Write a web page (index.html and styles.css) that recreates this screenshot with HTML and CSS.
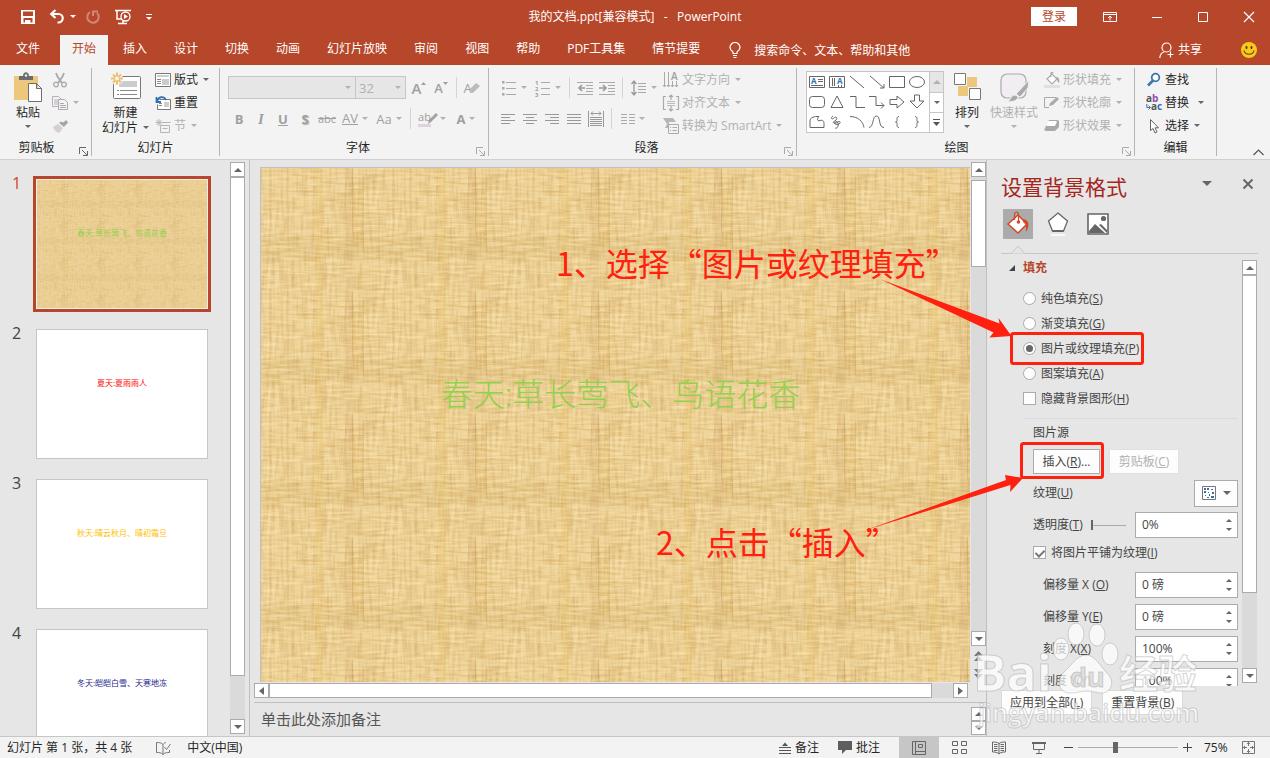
FILE: index.html
```html
<!DOCTYPE html>
<html lang="zh-CN">

<head>
    <meta charset="UTF-8">
    <meta name="viewport" content="width=device-width, initial-scale=1.0">
    <title>我的文档.ppt - PowerPoint</title>
    <link rel="stylesheet" href="styles.css">
</head>

<body>
    <svg class="defs" width="0" height="0" aria-hidden="true">
        <defs>
            <filter id="warp" x="0" y="0" width="1" height="1" color-interpolation-filters="sRGB">
                <feTurbulence type="fractalNoise" baseFrequency="0.35 0.03" numOctaves="2" seed="4" stitchTiles="stitch" />
                <feColorMatrix values="0 0 0 0 .76  0 0 0 0 .58  0 0 0 0 .3  1 0 0 0 -.4" />
            </filter>
            <filter id="weft" x="0" y="0" width="1" height="1" color-interpolation-filters="sRGB">
                <feTurbulence type="fractalNoise" baseFrequency="0.03 0.35" numOctaves="2" seed="9" stitchTiles="stitch" />
                <feColorMatrix values="0 0 0 0 .82  0 0 0 0 .64  0 0 0 0 .32  1 0 0 0 -.4" />
            </filter>
            <filter id="shine" x="0" y="0" width="1" height="1" color-interpolation-filters="sRGB">
                <feTurbulence type="fractalNoise" baseFrequency="0.05 0.4" numOctaves="2" seed="21" stitchTiles="stitch" />
                <feColorMatrix values="0 0 0 0 1  0 0 0 0 .92  0 0 0 0 .72  1.2 0 0 0 -.45" />
            </filter>
            <pattern id="linen" width="123" height="123" patternUnits="userSpaceOnUse">
                <rect width="123" height="123" fill="#efd59c" />
                <rect y="68" width="123" height="24" fill="#c8a860" opacity=".2" />
                <rect x="54" width="8" height="123" fill="#e5b84c" opacity=".25" />
                <rect x="84" width="8" height="123" fill="#b98b50" opacity=".16" />
                <rect x="92" y="20" width="10" height="58" fill="#deb04a" opacity=".2" />
                <rect width="123" height="123" filter="url(#warp)" />
                <rect width="123" height="123" filter="url(#weft)" />
                <rect width="123" height="123" filter="url(#shine)" />
                <path d="M91.500 0V66M102.500 8V84" stroke="#a8803c" opacity=".2" />
            </pattern>
            <pattern id="linen-small" width="123" height="123" patternUnits="userSpaceOnUse" patternTransform="scale(.3)" href="#linen" />
        </defs>
    </svg>

    <header class="titlebar">
        <div class="quick">
            <button aria-label="保存"><svg width="16" height="16" viewBox="0 0 16 16"><path fill="#fff" fill-rule="evenodd" d="M1 1h14v14H1zM3 2.500h10V7H3zM3.500 9h9v4.500h-2V11H5v2.500H3.500z" /></svg></button>
            <button class="undo" aria-label="撤消"><svg width="16" height="16" viewBox="0 0 16 16"><path d="M2 5h7.500a4.200 4.200 0 0 1 0 8.500H8.500M6.500 1 2.200 5l4.300 4" fill="none" stroke="#fff" stroke-width="2.200" /></svg><i class="caret"></i></button>
            <button class="faded" aria-label="恢复"><svg width="16" height="16" viewBox="0 0 16 16"><path d="M5 3.200A5.700 5.700 0 1 0 12 4M8 7V2.500h5" fill="none" stroke="#fff" stroke-width="2" /></svg></button>
            <button aria-label="从头开始"><svg width="18" height="16" viewBox="0 0 18 16"><path d="M1 1.500h16M3 2v8h5M9 11v4M4 14.500h9" fill="none" stroke="#fff" stroke-width="1.500" /><circle cx="11.500" cy="7.500" r="4.500" fill="#b7472a" stroke="#fff" stroke-width="1.300" /><path d="M10 5v5l4-2.500z" fill="#fff" /></svg></button>
            <button aria-label="自定义"><svg width="8" height="8" viewBox="0 0 8 8"><path d="M1 1.500h6" stroke="#fff" /><path d="M1 4h6L4 7z" fill="#fff" /></svg></button>
        </div>
        <h1>我的文档.ppt[兼容模式]&nbsp;&nbsp; -&nbsp;&nbsp; PowerPoint</h1>
        <div class="window-tools">
            <button class="login">登录</button>
            <button aria-label="功能区"><svg width="14" height="12" viewBox="0 0 14 12"><path d="M.5 1.500h13v9H.5zM.5 3.500h13M7 9.500V5M5 7l2-2 2 2" fill="none" stroke="#fff" /></svg></button>
            <button aria-label="最小化"><svg width="12" height="12" viewBox="0 0 12 12"><path d="M1 6.500h10" stroke="#fff" /></svg></button>
            <button aria-label="最大化"><svg width="12" height="12" viewBox="0 0 12 12"><path d="M1.500 1.500h9v9h-9z" fill="none" stroke="#fff" /></svg></button>
            <button aria-label="关闭"><svg width="12" height="12" viewBox="0 0 12 12"><path d="m1 1 10 10M11 1 1 11" stroke="#fff" stroke-width="1.200" /></svg></button>
        </div>
    </header>

    <nav class="tabs">
        <a href="#" class="file">文件</a>
        <a href="#" class="active">开始</a>
        <a href="#">插入</a>
        <a href="#">设计</a>
        <a href="#">切换</a>
        <a href="#">动画</a>
        <a href="#">幻灯片放映</a>
        <a href="#">审阅</a>
        <a href="#">视图</a>
        <a href="#">帮助</a>
        <a href="#">PDF工具集</a>
        <a href="#">情节提要</a>
        <label class="search">
            <svg width="12" height="16" viewBox="0 0 12 16"><path d="M4 11.500V10C2.500 8.800 1 7.500 1 5.500a5 5 0 0 1 10 0C11 7.500 9.500 8.800 8 10v1.500zM4 13.500h4M4.500 15.500h3" fill="none" stroke="#fff" stroke-width="1.200" /></svg>
            <input type="text" aria-label="搜索" placeholder="搜索命令、文本、帮助和其他">
        </label>
        <button class="share"><svg width="15" height="17" viewBox="0 0 15 17"><circle cx="7.500" cy="5.500" r="4.500" fill="none" stroke="#fff" stroke-width="1.200" /><path d="M.8 16c.3-3.500 2-5.500 4.500-6M11.500 9.500v6M8.500 12.500h6" fill="none" stroke="#fff" stroke-width="1.200" /></svg>共享</button>
        <button aria-label="反馈"><svg width="16" height="16" viewBox="0 0 16 16"><circle cx="8" cy="8" r="8" fill="#fdc913" /><ellipse cx="5.500" cy="5.500" rx="1" ry="1.700" fill="#444" /><ellipse cx="10.500" cy="5.500" rx="1" ry="1.700" fill="#444" /><path d="M3 8.500c1 5 9 5 10 0" fill="none" stroke="#444" stroke-width="1.200" /></svg></button>
    </nav>

    <section class="ribbon">
        <div class="group clipboard">
            <div class="tools">
                <button class="big">
                    <svg width="28" height="31" viewBox="0 0 28 31"><path d="M0 4h24v24H0z" fill="#ecc77c" /><path d="M5 8V4h4c0-5 6-5 6 0h4v4z" fill="#6d6d6d" /><circle cx="12" cy="3.500" r="1.200" fill="#f3f3f3" /><path d="M14.500 11.500h8l5 5v13h-13zM22.500 11.500v5h5" fill="#fff" stroke="#6d6d6d" /></svg>
                    <span>粘贴</span><i class="caret"></i>
                </button>
                <div class="rows off">
                    <button aria-label="剪切"><svg width="16" height="16" viewBox="0 0 16 16"><path d="M4 1c1 4 4 7 6 10M12 1c-1 4-4 7-6 10" fill="none" stroke="#aaa" stroke-width="1.800" /><circle cx="4" cy="12.500" r="2.300" fill="none" stroke="#aaa" stroke-width="1.300" /><circle cx="12" cy="12.500" r="2.300" fill="none" stroke="#aaa" stroke-width="1.300" /></svg></button>
                    <button aria-label="复制"><svg width="16" height="16" viewBox="0 0 16 16"><path d="M.5 1.500h6l3 3v7h-9zM2 5h4M2 7h4M2 9h4" fill="none" stroke="#b8b0b8" /><path d="M6.500 4.500h6l3 3v7h-9zM8 8.500h4M8 10.500h6M8 12.500h6" fill="#f3f3f3" stroke="#b0a8b0" /></svg><i class="caret"></i></button>
                    <button aria-label="格式刷"><svg width="17" height="16" viewBox="0 0 17 16"><path d="m1 9 5-3 5 4-4 5C4 14 2 12 1 9z" fill="#d5cfd5" /><path d="m7 5 5 4 1.500-2L16 5l-1.500-3L11 4.500 9 3.500z" fill="#a5a5a5" /></svg></button>
                </div>
            </div>
            <footer>剪贴板</footer><svg class="launch" width="9" height="9" viewBox="0 0 9 9"><path d="M.5 7V.5H7M3 3l5 5M8.500 4v4.500H4" fill="none" stroke="#666" /></svg>
        </div>

        <div class="group slides">
            <div class="tools">
                <button class="big">
                    <svg width="32" height="31" viewBox="0 0 32 31"><rect x="3.500" y="4.500" width="27" height="22" rx="1" fill="#fff" stroke="#777" /><path d="M9 9h18v6H9z" fill="#ccc" /><path d="M7 18.500h2M10 18.500h17M7 22.500h2M10 22.500h17" stroke="#888" /><path d="M7 0v13M1 6.500h12M2.500 2l9 9M11.500 2l-9 9" stroke="#f3f3f3" stroke-width="4" /><path d="M7 .5v12M1 6.500h12M3 2.500l8 8M11 2.500l-8 8" stroke="#ecc070" stroke-width="2" /><circle cx="7" cy="6.500" r="2" fill="#f3f3f3" /></svg>
                    <span>新建</span><span>幻灯片<i class="caret"></i></span>
                </button>
                <div class="rows">
                    <button><svg width="16" height="16" viewBox="0 0 16 16"><path d="M.5 1.500h15v13H.5z" fill="#fff" stroke="#777" /><path d="M2 3h12v2H2zM7 7h7v6H7z" fill="#ccc" /><path d="M2 7.500h4M2 9.500h4M2 11.500h4" stroke="#888" /></svg>版式<i class="caret"></i></button>
                    <button><svg width="16" height="16" viewBox="0 0 16 16"><path d="M4.500 4.500h11v10h-13v-5" fill="#fff" stroke="#777" /><path d="M9 7h5v5H9z" fill="#ccc" /><path d="M4 8.500h3M4 10.500h3" stroke="#888" /><path d="M1.500 2v5H6M2 6c2-5 7-5 9-1" fill="none" stroke="#2f6fb3" stroke-width="1.800" /></svg>重置</button>
                    <button class="off"><svg width="16" height="16" viewBox="0 0 16 16"><path d="M7 4.500h8.500M5.500 7.500h9v7h-9zM7.500 10.500h5M4 1v7M.5 4.500h7M1.500 2l5 5M6.500 2l-5 5" fill="none" stroke="#bbb3bb" /></svg>节<i class="caret"></i></button>
                </div>
            </div>
            <footer>幻灯片</footer>
        </div>

        <div class="group font off">
            <div class="lines">
                <div class="line">
                    <span class="combo name"><select disabled aria-label="字体"><option></option></select><i class="caret"></i></span>
                    <span class="combo size"><select disabled aria-label="字号"><option>32</option></select><i class="caret"></i></span>
                    <button class="letter">A<svg width="5" height="12" viewBox="0 0 5 12"><path d="M0 3h5L2.500 0z" fill="#a0a0a0" /></svg></button>
                    <button class="letter small">A<svg width="5" height="12" viewBox="0 0 5 12"><path d="M0 0h5L2.500 3z" fill="#a0a0a0" /></svg></button>
                    <i class="split"></i>
                    <button class="eraser" aria-label="清除格式"><span>A</span><svg width="12" height="11" viewBox="0 0 12 11"><path d="m0 8 7-7 4 3-7 7-3-1z" fill="#bbb" /></svg></button>
                </div>
                <div class="line">
                    <button><b>B</b></button>
                    <button><b class="it">I</b></button>
                    <button><b><u>U</u></b></button>
                    <button><b class="shade">S</b></button>
                    <button><s>abc</s></button>
                    <button class="drop"><span class="spacing">AV</span><i class="caret"></i></button>
                    <button class="drop">Aa<i class="caret"></i></button>
                    <i class="split"></i>
                    <button class="drop marker"><span>ab</span><svg width="11" height="12" viewBox="0 0 11 12"><path d="m1 11 1-4 7-7 2 2-7 7z" fill="#a0a0a0" /></svg><i class="caret"></i></button>
                    <button class="drop"><b>A</b><i class="caret"></i></button>
                </div>
            </div>
            <footer>字体</footer><svg class="launch" width="9" height="9" viewBox="0 0 9 9"><path d="M.5 7V.5H7M3 3l5 5M8.500 4v4.500H4" fill="none" stroke="#aaa" /></svg>
        </div>

        <div class="group para off">
            <div class="tools">
                <div class="lines">
                    <div class="line">
                        <button class="drop" aria-label="项目符号"><svg width="16" height="16" viewBox="0 0 16 16"><path d="M5 2.500h10M5 8.500h10M5 14.500h10" stroke="#aaa" /><path d="M1 1h2.500v2.500H1zM1 7h2.500v2.500H1zM1 13h2.500v2.500H1z" fill="#aaa" /></svg><i class="caret"></i></button>
                        <button class="drop" aria-label="编号"><svg width="16" height="16" viewBox="0 0 16 16"><path d="M6 2.500h9M6 8.500h9M6 14.500h9" stroke="#aaa" /><g class="digits"><text x="0" y="5">1</text><text x="0" y="11">2</text><text x="0" y="17">3</text></g></svg><i class="caret"></i></button>
                        <i class="split"></i>
                        <button aria-label="减少缩进"><svg width="16" height="14" viewBox="0 0 16 14"><path d="M0 1.500h16M9 4.500h7M9 7.500h7M9 10.500h7M0 13.500h16" stroke="#aaa" /><path d="M8 7H2M5 4 2 7l3 3" fill="none" stroke="#999" stroke-width="1.600" /></svg></button>
                        <button aria-label="增加缩进"><svg width="16" height="14" viewBox="0 0 16 14"><path d="M0 1.500h16M9 4.500h7M9 7.500h7M9 10.500h7M0 13.500h16" stroke="#aaa" /><path d="M0 7h6M4 4l3 3-3 3" fill="none" stroke="#999" stroke-width="1.600" /></svg></button>
                        <i class="split"></i>
                        <button class="drop" aria-label="行距"><svg width="16" height="16" viewBox="0 0 16 16"><path d="M7 3.500h8M7 6.500h8M7 9.500h8M7 12.500h8" stroke="#aaa" /><path d="M3 1v14M.5 4 3 1l2.500 3M.5 12 3 15l2.500-3" fill="none" stroke="#999" stroke-width="1.300" /></svg><i class="caret"></i></button>
                    </div>
                    <div class="line">
                        <button aria-label="左对齐"><svg width="14" height="12" viewBox="0 0 14 12"><path d="M0 1.500h14M0 4.500h9M0 7.500h14M0 10.500h9" stroke="#999" /></svg></button>
                        <button aria-label="居中"><svg width="14" height="12" viewBox="0 0 14 12"><path d="M0 1.500h14M3 4.500h8M0 7.500h14M3 10.500h8" stroke="#999" /></svg></button>
                        <button aria-label="右对齐"><svg width="14" height="12" viewBox="0 0 14 12"><path d="M0 1.500h14M5 4.500h9M0 7.500h14M5 10.500h9" stroke="#999" /></svg></button>
                        <button aria-label="两端对齐"><svg width="14" height="12" viewBox="0 0 14 12"><path d="M0 1.500h14M0 4.500h14M0 7.500h14M0 10.500h14" stroke="#999" /></svg></button>
                        <button aria-label="分散对齐"><svg width="16" height="16" viewBox="0 0 16 16"><path d="M.5 0v16M15.500 0v16M2 6.500h12M2 8.500h12M2 10.500h12M2 12.500h12M2 14.500h12M3 2.500h10M5 .5 3 2.500l2 2M11 .5l2 2-2 2" fill="none" stroke="#999" /></svg></button>
                        <i class="split"></i>
                        <button class="drop" aria-label="分栏"><svg width="14" height="12" viewBox="0 0 14 12"><path d="M0 1.500h6M0 4.500h6M0 7.500h6M0 10.500h6M8 1.500h6M8 4.500h6M8 7.500h6M8 10.500h6" stroke="#aaa" /></svg><i class="caret"></i></button>
                    </div>
                </div>
                <div class="rows">
                    <button><svg width="16" height="16" viewBox="0 0 16 16"><path d="M1.500 0v15M5.500 0v15M9.500 9v6M13.500 9v6M0 13l1.500 2L3 13M4 13l1.500 2L7 13M8 13l1.500 2 1.500-2M12 13l1.500 2 1.500-2" fill="none" stroke="#aaa" /><text class="letter-icon" x="8" y="8">A</text></svg>文字方向<i class="caret"></i></button>
                    <button><svg width="16" height="16" viewBox="0 0 16 16"><path d="M3 1.500H.5v13H3M13 1.500h2.500v13H13M8 0v5M6 2l2-2 2 2M8 11v5M6 14l2 2 2-2" fill="none" stroke="#aaa" stroke-width="1.200" /><path d="M4 6.500h8M4 8.500h8M4 10.500h8" stroke="#bbb" /></svg>对齐文本<i class="caret"></i></button>
                    <button><svg width="16" height="16" viewBox="0 0 16 16"><path d="M0 0h10l3 4H6v6H2l2-4z" fill="#bbb3bb" /><path d="M5.500 6.500h10v9h-10z" fill="#f3f3f3" stroke="#aaa" /><path d="M7 9.500h1M9.500 9.500H14M7 12.500h1M9.500 12.500H14" stroke="#aaa" /></svg>转换为 SmartArt<i class="caret"></i></button>
                </div>
            </div>
            <footer>段落</footer><svg class="launch" width="9" height="9" viewBox="0 0 9 9"><path d="M.5 7V.5H7M3 3l5 5M8.500 4v4.500H4" fill="none" stroke="#aaa" /></svg>
        </div>

        <div class="group draw">
            <div class="tools">
                <div class="gallery">
                    <div class="shapes">
                        <svg viewBox="0 0 16 14"><path d="M.5 1.500h15v11H.5zM9 4.500h5M9 6.500h5M2 10.500h12" /><text x="2" y="9">A</text></svg>
                        <svg viewBox="0 0 16 14"><path d="M.5 1.500h15v11H.5zM3.500 3v8M5.500 3v8M9.500 10v2M12.500 10v2" /><text x="8" y="9">A</text></svg>
                        <svg viewBox="0 0 16 14"><path d="m1 1 14 12" /></svg>
                        <svg viewBox="0 0 16 14"><path d="m1 1 14 12M15 9v4h-4" /></svg>
                        <svg viewBox="0 0 16 14"><path d="M.5 1.500h15v11H.5z" /></svg>
                        <svg viewBox="0 0 16 14"><ellipse cx="8" cy="7" rx="7.500" ry="5.500" /></svg>
                        <svg viewBox="0 0 16 14"><rect x=".5" y="1.500" width="15" height="11" rx="3" /></svg>
                        <svg viewBox="0 0 16 14"><path d="M8 1 2 12.500h12z" /></svg>
                        <svg viewBox="0 0 16 14"><path d="M1 1.500h6v11h9" /></svg>
                        <svg viewBox="0 0 16 14"><path d="M0 1.500h7v9h8M12 7.500l3 3-3 3" /></svg>
                        <svg viewBox="0 0 16 14"><path d="M1 4.500h7V1l7 6-7 6V9.500H1z" /></svg>
                        <svg viewBox="0 0 16 14"><path d="M5.500 0v6H1l7 7 7-7h-4.500V0z" /></svg>
                        <svg viewBox="0 0 16 14"><path d="M1 12.500V6c0-3 3-4.500 7-4.500h2c-3 3-1 5 1 4 3-1 4 1 4 3v4z" /></svg>
                        <svg viewBox="0 0 16 14"><path d="M4 1c-3 2-1 4 1 2s4 0 2 2-4 2-2 3 5-3 6-1-3 3-5 2 2-4 3-1-1 6-3 5" /></svg>
                        <svg viewBox="0 0 16 14"><path d="M1 1.500c8 0 13 5 14 11" /></svg>
                        <svg viewBox="0 0 16 14"><path d="M0 12.500C5 12 3 1 7.500 1S9 12.500 15 12.500" /></svg>
                        <svg viewBox="0 0 16 14"><path d="M10 1.500C6 1.500 10 7 6.500 7 10 7 6 12.500 10 12.500" /></svg>
                        <svg viewBox="0 0 16 14"><path d="M6 1.500c4 0 0 5.500 3.500 5.500C6 7 10 12.500 6 12.500" /></svg>
                    </div>
                    <div class="gallery-nav">
                        <button class="off" aria-label="上一行"><i class="caret up"></i></button>
                        <button aria-label="下一行"><i class="caret"></i></button>
                        <button aria-label="其他"><svg width="7" height="8" viewBox="0 0 7 8"><path d="M0 .5h7" stroke="#555" /><path d="M0 3h7L3.500 7z" fill="#555" /></svg></button>
                    </div>
                </div>
                <button class="big arrange">
                    <svg width="28" height="31" viewBox="0 0 28 31"><path d="M14 5h10v10H14zM5 14h10v10H5z" fill="#ecc77c" /><path d="M1.500 1.500h11v11h-11zM16.500 16.500h11v11h-11z" fill="#fff" stroke="#777" /></svg>
                    <span>排列</span><i class="caret"></i>
                </button>
                <button class="big off">
                    <svg width="32" height="31" viewBox="0 0 32 31"><rect x="3" y="2" width="25" height="24" rx="6" fill="#f1edf2" stroke="#aaa" stroke-width="1.200" /><path d="m31 8-1 8-8 9-4-3z" fill="#aaa" stroke="#f3f3f3" /><path d="M9 30c4-1 3-7 8-7 5 1 4 7-8 7z" fill="#aaa" stroke="#f3f3f3" /></svg>
                    <span>快速样式</span><i class="caret"></i>
                </button>
                <div class="rows off">
                    <button><svg width="16" height="16" viewBox="0 0 16 16"><path d="M0 13h16v3H0z" fill="#e4dde4" /><path d="m3 7 5-5 5 5-5 5zM7 5V1.500c0-1.500 2-1.500 2 0" fill="#fff" stroke="#aaa" stroke-width="1.200" /><path d="M12 5c3 0 4 3 3 6-2-1-1-3-3-4z" fill="#aaa" /></svg>形状填充<i class="caret"></i></button>
                    <button><svg width="16" height="16" viewBox="0 0 16 16"><path d="M12 2.500H.5v10H5" fill="none" stroke="#aaa" /><path d="m5 11 1-3 7-6 2 2-6 6z" fill="#aaa" /></svg>形状轮廓<i class="caret"></i></button>
                    <button><svg width="16" height="16" viewBox="0 0 16 16"><path d="M5 2h8c2 0 2 1 2 2v5l-4 4H3c-3 0-3-1-2-3z" fill="#aaa" /><path d="M5 3h7c1 0 1 1 0 3l-1 2H2.500C2 8 3.500 3 5 3z" fill="#fff" /></svg>形状效果<i class="caret"></i></button>
                </div>
            </div>
            <footer>绘图</footer><svg class="launch" width="9" height="9" viewBox="0 0 9 9"><path d="M.5 7V.5H7M3 3l5 5M8.500 4v4.500H4" fill="none" stroke="#aaa" /></svg>
        </div>

        <div class="group edit">
            <div class="tools">
                <div class="rows">
                    <button><svg width="16" height="16" viewBox="0 0 16 16"><circle cx="9.500" cy="5.500" r="3.800" fill="#fff" stroke="#3f76b5" stroke-width="1.800" /><path d="m7 8.500-5 5" stroke="#3f76b5" stroke-width="2.600" /></svg>查找</button>
                    <button class="wide"><svg class="abac" width="16" height="18" viewBox="0 0 16 18"><text x="0" y="8">a<tspan fill="#8a52ad">b</tspan></text><text x="5" y="16">a<tspan fill="#2f6fb3">c</tspan></text><path d="M.8 10v3.500h3M2.500 11.500l2 2-2 2" fill="none" stroke="#2f6fb3" /></svg>替换<i class="caret"></i></button>
                    <button><svg width="16" height="16" viewBox="0 0 16 16"><path d="M4.500 1.500v11l2.500-2 2 4.500 2-1-2-4.200h3.500z" fill="#fff" stroke="#666" /></svg>选择<i class="caret"></i></button>
                </div>
            </div>
            <footer>编辑</footer>
        </div>
        <button class="collapse" aria-label="折叠功能区"><svg width="11" height="7" viewBox="0 0 11 7"><path d="M.5 6 5.500 1l5 5" fill="none" stroke="#555" stroke-width="1.200" /></svg></button>
    </section>

    <main>
        <aside class="thumbs">
            <ol>
                <li class="selected"><span>1</span><a href="#" class="thumb green"><svg class="texture"><rect width="100%" height="100%" fill="url(#linen-small)" /></svg><em>春天:草长莺飞、鸟语花香</em></a></li>
                <li><span>2</span><a href="#" class="thumb red"><em>夏天:夏雨雨人</em></a></li>
                <li><span>3</span><a href="#" class="thumb gold"><em>秋天:晴云秋月、晴初霜旦</em></a></li>
                <li><span>4</span><a href="#" class="thumb navy"><em>冬天:皑皑白雪、天寒地冻</em></a></li>
            </ol>
            <div class="scroll">
                <button aria-label="向上"><i class="caret up"></i></button>
                <div class="track"><div class="grip thumbs-grip"></div></div>
                <button aria-label="向下"><i class="caret"></i></button>
            </div>
        </aside>

        <section class="editor">
            <div class="stage">
                <div class="canvas">
                    <article class="slide">
                        <svg class="texture"><rect width="100%" height="100%" fill="url(#linen)" /></svg>
                        <h2>春天:草长莺飞、鸟语花香</h2>
                    </article>
                    <div class="scroll flat">
                        <button aria-label="向左"><i class="caret left"></i></button>
                        <div class="track"><div class="grip slide-grip-x"></div></div>
                        <button aria-label="向右"><i class="caret right"></i></button>
                    </div>
                </div>
                <div class="side">
                    <div class="scroll">
                        <button aria-label="向上"><i class="caret up"></i></button>
                        <div class="track gap"><div class="grip slide-grip-y"></div></div>
                        <button aria-label="向下"><i class="caret"></i></button>
                    </div>
                    <div class="jump">
                        <button aria-label="上一张"><svg width="9" height="10" viewBox="0 0 9 10"><path d="M0 5 4.500 0 9 5zM0 10l4.500-5L9 10z" fill="#777" /></svg></button>
                        <button aria-label="下一张"><svg width="9" height="10" viewBox="0 0 9 10"><path d="m0 0 4.500 5L9 0zM0 5l4.500 5L9 5z" fill="#777" /></svg></button>
                    </div>
                </div>
            </div>
            <div class="notes">
                <input type="text" aria-label="备注" placeholder="单击此处添加备注">
                <div class="notes-nav">
                    <button aria-label="向上"><i class="caret up"></i></button>
                    <button aria-label="向下"><i class="caret"></i></button>
                </div>
            </div>
        </section>

        <aside class="pane">
            <div class="pane-head">
                <h2>设置背景格式</h2>
                <button aria-label="选项"><i class="caret large"></i></button>
                <button aria-label="关闭"><svg width="12" height="12" viewBox="0 0 12 12"><path d="m1.500 1.500 9 9M10.500 1.500l-9 9" stroke="#666" stroke-width="2" /></svg></button>
            </div>
            <div class="pane-tabs">
                <button class="active" aria-label="填充"><svg width="26" height="26" viewBox="0 0 26 26"><path d="m3 13 10-9 9 9-9 9z" fill="#fff" stroke="#d24726" stroke-width="1.500" /><path d="M9.500 9V4c0-4 4-4 4 0v6" fill="none" stroke="#d24726" stroke-width="1.200" /><circle cx="13.500" cy="11" r="1.800" fill="#d24726" /><path d="M18 8c6 1 7 6 3 13 0-5 1-7-3-10z" fill="#d24726" /></svg></button>
                <button aria-label="效果"><svg width="22" height="26" viewBox="0 0 22 26"><path d="m11 2 9.500 8-4 10h-11l-4-10z" fill="#fff" stroke="#666" stroke-width="1.300" /><path d="M5.500 20h11" stroke="#666" stroke-width="2" /><path d="M4 23h14v2H4z" fill="#f8f8f8" /></svg></button>
                <button aria-label="图片"><svg width="22" height="22" viewBox="0 0 22 22"><path d="M1 1h20v20H1z" fill="#fff" stroke="#666" stroke-width="1.600" /><path d="m2 18 6-7 10 9H2zM12 12l2-1 6 6v3z" fill="#666" /><circle cx="16.500" cy="5.500" r="2.600" fill="#666" /></svg></button>
            </div>
            <svg class="notch" height="10" width="36" viewBox="0 0 36 10"><path d="M0 9.500h10.500L17 2l6.500 7.500H36" fill="#e6e6e6" stroke="#c6c6c6" /></svg>
            <div class="pane-body">
                <form class="options">
                    <h3><svg width="8" height="8" viewBox="0 0 8 8"><path d="M7 1v6H1z" fill="#444" /></svg>填充</h3>
                    <label class="pick"><input type="radio" name="fill">纯色填充(<u>S</u>)</label>
                    <label class="pick"><input type="radio" name="fill">渐变填充(<u>G</u>)</label>
                    <label class="pick"><input type="radio" name="fill" checked>图片或纹理填充(<u>P</u>)</label>
                    <label class="pick"><input type="radio" name="fill">图案填充(<u>A</u>)</label>
                    <label class="pick"><input type="checkbox">隐藏背景图形(<u>H</u>)</label>
                    <hr>
                    <p class="source">图片源</p>
                    <div class="source-buttons">
                        <button type="button">插入(<u>R</u>)...</button>
                        <button type="button" disabled>剪贴板(<u>C</u>)</button>
                    </div>
                    <div class="field">
                        <span>纹理(<u>U</u>)</span>
                        <button type="button" class="swatch" aria-label="纹理"><svg width="14" height="14" viewBox="0 0 14 14"><path d="M.5.5h13v13H.5z" fill="#fff" stroke="#777" /><path d="M2 2h2v2H2zM5 2h2v2H5zM9 3h2v1H9zM2 5h2v2H2zM6 6h1v1H6zM10 6h2v2h-2zM3 9h1v1H3zM7 8h1v2H7zM9 10h3v2H9zM5 11h2v1H5z" fill="#3f6da8" /></svg><i class="caret large"></i></button>
                    </div>
                    <div class="field">
                        <label for="alpha">透明度(<u>T</u>)</label>
                        <input class="range" type="range" value="0" aria-label="透明度">
                        <div class="spin"><input id="alpha" type="text" value="0%"><span><i class="caret up"></i><i class="caret"></i></span></div>
                    </div>
                    <label class="pick tile"><input type="checkbox" checked>将图片平铺为纹理(<u>I</u>)</label>
                    <div class="field inner">
                        <label for="ox">偏移量 X (<u>O</u>)</label>
                        <div class="spin"><input id="ox" type="text" value="0 磅"><span><i class="caret up"></i><i class="caret"></i></span></div>
                    </div>
                    <div class="field inner">
                        <label for="oy">偏移量 Y(<u>E</u>)</label>
                        <div class="spin"><input id="oy" type="text" value="0 磅"><span><i class="caret up"></i><i class="caret"></i></span></div>
                    </div>
                    <div class="field inner">
                        <label for="sx">刻度 X(<u>X</u>)</label>
                        <div class="spin"><input id="sx" type="text" value="100%"><span><i class="caret up"></i><i class="caret"></i></span></div>
                    </div>
                    <div class="field inner">
                        <label for="sy">刻度 Y(<u>Y</u>)</label>
                        <div class="spin"><input id="sy" type="text" value="100%"><span><i class="caret up"></i><i class="caret"></i></span></div>
                    </div>
                </form>
                <div class="scroll">
                    <button aria-label="向上"><i class="caret up"></i></button>
                    <div class="track"><div class="grip pane-grip"></div></div>
                    <button aria-label="向下"><i class="caret"></i></button>
                </div>
            </div>
            <div class="pane-foot">
                <button>应用到全部(<u>L</u>)</button>
                <button>重置背景(<u>B</u>)</button>
            </div>
        </aside>

        <svg class="marks" width="730" height="576" viewBox="540 160 730 576">
            <g fill="#ff2010">
                <text x="556" y="276">1、选择“图片或纹理填充”</text>
                <text x="656" y="555">2、点击“插入”</text>
                <path d="m881 279.500 118.500 44-1-5.500 13 18-22 1.500 4-5z" />
                <path d="m866 530 140-50-1-5 18 3-13 14 .5-7z" />
            </g>
            <rect x="1011.500" y="333.500" width="131" height="30" rx="2" fill="none" stroke="#ff2010" stroke-width="3" />
            <rect x="1021.500" y="443.500" width="81" height="34" rx="2" fill="none" stroke="#ff2010" stroke-width="3" />
            <g class="watermark">
                <text class="logo" x="973" y="691">Bai</text>
                <ellipse cx="1061" cy="649" rx="8" ry="11" />
                <ellipse cx="1076" cy="634" rx="8" ry="11" />
                <ellipse cx="1097" cy="635" rx="8" ry="11" />
                <ellipse cx="1110" cy="654" rx="8" ry="11" />
                <path d="M1086 655c9 0 14 11 22 19 8 9 2 20-8 19-6-1-9-2-14-2s-9 2-16 2c-11 0-14-12-7-20 9-8 14-18 23-18z" />
                <text class="du" x="1070" y="687">du</text>
                <text class="jy" x="1119" y="688">经验</text>
                <text class="url" x="978" y="722">jingyan.baidu.com</text>
            </g>
        </svg>
    </main>

    <footer class="status">
        <span class="count">幻灯片 第 1 张，共 4 张</span>
        <svg width="15" height="14" viewBox="0 0 15 14"><path d="M7 3.500C5 1.500 3 1.500.5 1.500v10C3 11.500 5 11.500 7 13.500V3.500c1-1 2-2 3-2M7 13.500c2-2 4-2 6.500-2V9M8.500 6l2 2.500 4-5.500" fill="none" stroke="#777" /></svg>
        <span class="lang">中文(中国)</span>
        <button class="note"><svg width="12" height="12" viewBox="0 0 12 12"><path d="M0 5.500h12M0 8.500h12M0 11.500h12" stroke="#555" /><path d="m3 4 3-3.500L9 4z" fill="#555" /></svg>备注</button>
        <button class="note"><svg width="14" height="13" viewBox="0 0 14 13"><path d="M0 0h14v9H8l-4 4V9H0z" fill="#5e5e5e" /></svg>批注</button>
        <div class="views">
            <button class="active" aria-label="普通"><svg width="14" height="14" viewBox="0 0 14 14"><path d="M.5.5h13v13H.5zM3.500.5v13M3.500 10.500h10M6.500 3.500h4v3h-4z" fill="none" stroke="#666" /></svg></button>
            <button aria-label="幻灯片浏览"><svg width="15" height="14" viewBox="0 0 15 14"><path d="M.5.500h5v4h-5zM9.500.500h5v4h-5zM.5 8.500h5v4h-5zM9.500 8.500h5v4h-5z" fill="none" stroke="#666" /></svg></button>
            <button aria-label="阅读视图"><svg width="14" height="14" viewBox="0 0 14 14"><path d="M7 2.500C5 1 3 1 .5 1v10c2.500 0 4.500 0 6.500 2 2-2 4-2 6.500-2V1C11 1 9 1 7 2.500zM7 2v11M2 3.500h3.500M2 5.500h3.500M2 7.500h3.500M2 9.500h3.500M8.500 3.500H12M8.500 5.500H12M8.500 7.500H12M8.500 9.500H12" fill="none" stroke="#666" /></svg></button>
            <button aria-label="幻灯片放映"><svg width="14" height="14" viewBox="0 0 14 14"><path d="M0 2h14" stroke="#666" stroke-width="2" /><path d="M1.500 2v6.500h11V2M7 8.500v4M4 12.500h6" fill="none" stroke="#666" /></svg></button>
        </div>
        <button aria-label="缩小"><svg width="9" height="9" viewBox="0 0 9 9"><path d="M0 4.500h9" stroke="#444" /></svg></button>
        <input class="zoom" type="range" min="0" max="100" value="37" aria-label="缩放">
        <button aria-label="放大"><svg width="9" height="9" viewBox="0 0 9 9"><path d="M0 4.500h9M4.500 0v9" stroke="#444" /></svg></button>
        <span class="percent">75%</span>
        <button class="fit" aria-label="适应窗口"><svg width="13" height="13" viewBox="0 0 13 13"><path d="M.5.500h12v12H.5zM6.500 1v4M5 3l1.500-1.500L8 3M6.500 12V8M5 10l1.500 1.500L8 10M1 6.500h4M12 6.500H8M3 5 1.500 6.500 3 8M10 5l1.500 1.500L10 8" fill="none" stroke="#777" /></svg></button>
    </footer>
</body>

</html>
```

FILE: styles.css
```css
* {
    box-sizing: border-box;
    margin: 0;
    padding: 0;
}
body {
    height: 100vh;
    display: flex;
    flex-direction: column;
    overflow: hidden;
    font-family: "Open Sans", "Noto Sans CJK SC", sans-serif;
    font-size: 12px;
    line-height: 16px;
    color: #262626;
    background-color: #e6e6e6;
}
button, input, select {
    font: inherit;
    color: inherit;
    border: 0;
    background: none;
    border-radius: 0;
}
button {
    display: flex;
    align-items: center;
    justify-content: center;
    white-space: nowrap;
}
a {
    color: inherit;
    text-decoration: none;
}
svg {
    flex: none;
    display: block;
}
.defs {
    position: absolute;
}

/* little triangles */
.caret {
    width: 0;
    height: 0;
    flex: none;
    color: #666;
    border: 3px solid transparent;
    border-top-color: currentColor;
    border-bottom-width: 0;
}
.caret.up {
    border-width: 0 4px 4px;
    border-bottom-color: currentColor;
}
.caret.large {
    border-width: 5px 5px 0;
}
.titlebar .caret {
    color: #fff;
}
.off, .off .caret {
    color: #b1b1b1;
}

/* title bar */
.titlebar {
    height: 35px;
    flex: none;
    display: grid;
    grid-template-columns: 1fr auto 1fr;
    align-items: center;
    padding-bottom: 2px;
    color: #fff;
    background-color: #b7472a;
}
.titlebar h1 {
    font-size: 12px;
    font-weight: normal;
}
.quick {
    display: flex;
    align-items: center;
    gap: 13px;
    padding-left: 20px;
}
.quick button {
    gap: 5px;
}
.quick .undo {
    margin-right: -4px;
}
.faded {
    opacity: .35;
}
.window-tools {
    display: flex;
    align-items: center;
    justify-content: flex-end;
    gap: 34px;
    padding-right: 15px;
}
.login {
    width: 46px;
    height: 19px;
    margin-right: -8px;
    color: #b7472a;
    background-color: #fff;
}

/* tabs */
.tabs {
    height: 30px;
    flex: none;
    display: flex;
    align-items: center;
    gap: 3px;
    padding: 0 13px 0 4px;
    color: #fff;
    background-color: #b7472a;
}
.tabs a {
    height: 30px;
    line-height: 28px;
    padding: 0 12px;
    white-space: nowrap;
}
.tabs .file {
    margin-right: 5px;
}
.tabs .active {
    color: #b7472a;
    background-color: #f3f3f3;
}
.search {
    flex: 1;
    display: flex;
    align-items: center;
    gap: 13px;
    padding-left: 14px;
}
.search input {
    flex: 1;
    min-width: 0;
    height: 28px;
}
.search input::placeholder {
    color: #fff;
}
.share {
    gap: 4px;
    margin-right: 36px;
}

/* ribbon */
.ribbon {
    height: 95px;
    flex: none;
    display: flex;
    padding: 3px 0;
    background-color: #f3f3f3;
    border-bottom: 1px solid #d2d0ce;
}
.ribbon svg {
    overflow: visible;
}
.group {
    position: relative;
    display: flex;
    flex-direction: column;
    border-right: 1px solid #b5b5b5;
}
.group footer {
    height: 19px;
    line-height: 22px;
    text-align: center;
    color: #262626;
}
.tools {
    height: 69px;
    display: flex;
}
.launch {
    position: absolute;
    right: 3px;
    bottom: 0;
}
.big {
    flex-direction: column;
    justify-content: flex-start;
    padding-top: 4px;
    line-height: 15px;
}
.big span {
    display: flex;
    align-items: center;
    gap: 5px;
}
.big span:first-of-type {
    margin-top: 2px;
}
.big > .caret {
    margin-top: 5px;
}
.rows {
    display: flex;
    flex-direction: column;
}
.rows button {
    height: 23px;
    justify-content: flex-start;
    gap: 3px;
}
.rows .caret {
    margin-left: 2px;
}
.line .caret {
    margin-left: 4px;
}
.rows .wide .caret {
    margin-left: 6px;
}
.lines {
    height: 69px;
    padding-top: 4px;
}
.line {
    height: 31px;
    display: flex;
    align-items: center;
}
.line button {
    width: 22px;
    height: 22px;
}
.line .drop {
    width: 34px;
}
.split {
    width: 1px;
    height: 21px;
    margin: 0 4px;
    background-color: #d5d5d5;
}
.clipboard {
    width: 92px;
}
.clipboard .tools {
    gap: 10px;
    padding-left: 14px;
}
.clipboard footer {
    padding-right: 18px;
}
.slides {
    width: 128px;
}
.slides .tools {
    gap: 6px;
    padding-left: 10px;
}
.font {
    width: 269px;
    padding-left: 8px;
}
.font .line {
    color: #a0a0a0;
    font-size: 13px;
}
.combo {
    height: 23px;
    display: flex;
    align-items: center;
    padding-right: 4px;
    color: #b1b1b1;
    background-color: #e6e6e6;
    border: 1px solid #c6c6c6;
}
.combo select {
    flex: 1;
    min-width: 0;
    padding-left: 3px;
    appearance: none;
    opacity: 1;
}
.name {
    width: 128px;
}
.size {
    width: 50px;
    margin-right: 2px;
    border-left: 0;
}
.line .letter {
    font-size: 15px;
    font-weight: 600;
}
.line .small {
    font-size: 13px;
}
.eraser svg {
    margin-left: -3px;
}
.it {
    font-family: "Liberation Serif", serif;
    font-style: italic;
    font-size: 15px;
}
.shade {
    text-shadow: 1px 1px 1px #aaa;
}
.line s {
    font-size: 11px;
}
.spacing {
    line-height: 12px;
    border-bottom: 1px solid #a0a0a0;
}
.marker span {
    font-size: 11px;
    line-height: 14px;
    border-bottom: 3px solid #ddd5dd;
}
.marker svg {
    margin-left: -4px;
}
.line .marker .caret {
    margin-left: 2px;
}
.para {
    width: 308px;
    padding-left: 8px;
}
.para .tools {
    gap: 2px;
}
.para .lines {
    width: 164px;
}
.digits {
    font-size: 6px;
    font-weight: bold;
    fill: #a0a0a0;
}
.letter-icon {
    font-size: 10px;
    font-weight: 600;
    fill: #a0a0a0;
}
.abac {
    font-size: 10px;
    font-weight: bold;
    fill: #555;
}
.draw {
    width: 338px;
}
.draw .tools {
    padding-left: 9px;
}
.draw footer {
    padding-right: 18px;
}
.gallery {
    width: 138px;
    height: 62px;
    margin-top: 3px;
    display: flex;
    background-color: #fff;
    border: 1px solid #c6c6c6;
}
.shapes {
    flex: 1;
    display: grid;
    grid-template-columns: repeat(6, 20px);
    grid-template-rows: repeat(3, 20px);
    place-items: center;
}
.shapes svg {
    width: 16px;
    height: 14px;
    fill: none;
    stroke: #666;
}
.shapes text {
    font-size: 8px;
    font-weight: bold;
    fill: #2f6fb3;
    stroke: none;
}
.gallery-nav {
    width: 14px;
    display: grid;
    grid-template-rows: repeat(3, 20px);
    border-left: 1px solid #c6c6c6;
}
.gallery-nav button + button {
    border-top: 1px solid #c6c6c6;
}
.gallery-nav .off {
    background-color: #e6e6e6;
}
.arrange {
    padding: 4px 9px 0;
}
.draw .rows {
    margin-left: 6px;
}
.edit {
    width: 82px;
}
.edit .tools {
    padding-left: 11px;
}
.collapse {
    margin-left: auto;
    align-self: flex-end;
    padding-right: 6px;
}

/* work area */
main {
    flex: 1;
    min-height: 0;
    position: relative;
    display: grid;
    grid-template-columns: 250px minmax(0, 1fr) 283px;
    overflow: hidden;
}
.scroll {
    width: 15px;
    flex: none;
    display: flex;
    flex-direction: column;
}
.scroll button {
    width: 15px;
    height: 15px;
    flex: none;
    background-color: #fff;
    border: 1px solid #ababab;
}
.scroll .caret, .notes-nav .caret {
    border-width: 4px 4px 0;
}
.scroll .up, .notes-nav .up {
    border-width: 0 4px 4px;
}
.scroll .left {
    border-width: 4px 5px 4px 0;
    border-color: transparent currentColor;
}
.scroll .right {
    border-width: 4px 0 4px 5px;
    border-color: transparent currentColor;
}
.track {
    flex: 1;
    display: flex;
    flex-direction: column;
    background-color: #dadada;
}
.grip {
    background-color: #fff;
    border: 1px solid #ababab;
}
.flat, .flat .track {
    flex-direction: row;
}
.flat {
    width: auto;
}
.thumbs {
    min-height: 0;
    display: flex;
    justify-content: space-between;
    padding: 2px 4px 2px 0;
    border-right: 1px solid #c0c0c0;
}
.thumbs ol {
    display: flex;
    flex-direction: column;
    gap: 20px;
    list-style: none;
    padding: 17px 0 0 12px;
    height: calc(100% + 2px);
    overflow: hidden;
}
.thumbs li {
    display: flex;
    gap: 15px;
    padding-right: 3px;
    font-size: 16px;
    line-height: 8px;
    color: #444;
}
.thumbs .selected {
    color: #d24726;
}
.thumbs li > span {
    width: 9px;
}
.thumb {
    width: 172px;
    height: 130px;
    position: relative;
    display: flex;
    justify-content: center;
    padding-top: 48px;
    background-color: #fff;
    border: 1px solid #c6c6c6;
}
.thumb em {
    position: relative;
    font-size: 8px;
    line-height: 10px;
    font-style: normal;
}
.selected .thumb {
    background-color: #e9cd93;
    border-color: #eee;
    outline: 3px solid #b7472a;
}
.selected .texture {
    opacity: .6;
}
.thumb.green, .slide h2 {
    color: #92d050;
}
.thumb.red {
    color: #ff0000;
}
.thumb.gold {
    color: #ffc000;
}
.thumb.navy {
    color: #1c1c8c;
}
.thumbs-grip {
    height: 92%;
}
.texture {
    position: absolute;
    top: 0;
    left: 0;
    width: 100%;
    height: 100%;
}
.editor {
    min-height: 0;
    display: flex;
    flex-direction: column;
    padding: 2px 0 2px 4px;
    border-right: 1px solid #c0c0c0;
}
.stage {
    flex: 1;
    min-height: 0;
    display: flex;
}
.canvas {
    flex: 1;
    display: flex;
    flex-direction: column;
    gap: 1px;
    padding-bottom: 4px;
    padding-top: 5px;
}
.slide {
    flex: 1;
    position: relative;
    margin-left: 6px;
    padding-top: 202px;
    text-align: center;
    border: 1px solid #c0c0c0;
    border-width: 1px 0 0 1px;
}
.slide h2 {
    position: relative;
    font-size: 32px;
    line-height: 48px;
    font-weight: 300;
    padding-left: 10px;
}
.canvas .scroll {
    margin-right: 2px;
}
.slide-grip-x {
    width: 97%;
}
.side {
    width: 16px;
    padding-left: 1px;
    display: flex;
    flex-direction: column;
}
.side .scroll {
    flex: 1;
}
.track.gap {
    padding-top: 3px;
}
.slide-grip-y {
    height: 87px;
}
.jump {
    height: 56px;
    display: flex;
    flex-direction: column;
    align-items: center;
    gap: 8px;
    padding-top: 5px;
}
.notes {
    height: 32px;
    display: flex;
    justify-content: space-between;
    border-top: 1px solid #c0c0c0;
    padding-left: 7px;
}
.notes input {
    flex: 1;
    font-size: 15px;
    color: #555;
}
.notes input::placeholder {
    color: #555;
}
.notes-nav {
    width: 15px;
    padding-top: 4px;
}
.notes-nav button {
    width: 15px;
    height: 14px;
    background-color: #fff;
    border: 1px solid #ababab;
}

/* format pane */
.pane {
    min-height: 0;
    display: flex;
    flex-direction: column;
    padding: 14px 12px 0 14px;
    color: #444;
}
.pane-head {
    height: 27px;
    display: flex;
    align-items: center;
    gap: 30px;
}
.pane-head h2 {
    flex: 1;
    font-size: 21px;
    line-height: 27px;
    font-weight: normal;
    color: #a4261d;
}
.pane-head button {
    margin-bottom: 8px;
}
.pane-head button:last-child {
    margin-right: 4px;
}
.pane-tabs {
    display: flex;
    gap: 10px;
    padding: 8px 0 5px 2px;
}
.pane-tabs button {
    width: 30px;
    height: 30px;
}
.pane-tabs .active {
    background-color: #ababab;
}
.notch {
    width: 36px;
    position: relative;
    margin-bottom: -1px;
}
.pane-body {
    flex: 1;
    min-height: 0;
    display: flex;
    justify-content: space-between;
    border-top: 1px solid #c6c6c6;
    padding-top: 6px;
}
.pane-body > .scroll {
    height: calc(100% - 3px);
    margin-right: 1px;
}
.pane-grip {
    height: 81%;
}
.options {
    width: 237px;
    overflow: hidden;
    padding-left: 10px;
}
.options h3 {
    height: 26px;
    display: flex;
    gap: 7px;
    align-items: flex-start;
    font-size: 12px;
    font-weight: bold;
    line-height: 16px;
    color: #b7472a;
    margin-left: -3px;
}
.options h3 svg {
    margin-top: 4px;
}
.pick {
    height: 25px;
    display: flex;
    align-items: center;
    padding-left: 12px;
    white-space: nowrap;
}
.pick input {
    appearance: none;
    width: 13px;
    height: 13px;
    margin-right: 5px;
    background-color: #fdfdfd;
    border: 1px solid #ababab;
    display: grid;
    place-content: center;
}
.pick [type="radio"] {
    border-radius: 50%;
}
.pick [type="radio"]:checked::before {
    content: "";
    width: 7px;
    height: 7px;
    border-radius: 50%;
    background-color: #666;
}
.pick [type="checkbox"]:checked::before {
    content: "";
    width: 4px;
    height: 7px;
    border: solid #777;
    border-width: 0 2px 2px 0;
    transform: rotate(45deg);
}
.options hr {
    border: 0;
    border-top: 1px solid #dadada;
    margin: 7px 0 6px 12px;
}
.source {
    padding-left: 22px;
}
.source-buttons {
    display: flex;
    gap: 9px;
    padding: 8px 0 3px 22px;
}
.source-buttons button, .pane-foot button {
    height: 25px;
    background-color: #fdfdfd;
    border: 1px solid #ababab;
}
.source-buttons button {
    width: 67px;
}
.source-buttons button:disabled {
    width: 70px;
    color: #b1b1b1;
    border-color: #e1e1e1;
}
.field {
    height: 32px;
    display: flex;
    align-items: center;
    justify-content: space-between;
    padding-left: 22px;
    white-space: nowrap;
}
.inner {
    padding-left: 32px;
}
.swatch {
    width: 44px;
    height: 27px;
    gap: 7px;
    background-color: #fdfdfd;
    border: 1px solid #ababab;
}
.swatch .large {
    border-width: 4px 4px 0;
}
.spin {
    width: 103px;
    height: 26px;
    display: flex;
    background-color: #fff;
    border: 1px solid #ababab;
}
.spin input {
    flex: 1;
    min-width: 0;
    padding-left: 6px;
}
.spin span {
    width: 16px;
    display: flex;
    flex-direction: column;
    align-items: center;
    justify-content: space-evenly;
}
.spin .up {
    border-width: 0 3px 3px;
}
.range, .zoom {
    appearance: none;
    height: 14px;
    background: linear-gradient(#ababab, #ababab) center / 100% 1px no-repeat;
}
.range {
    width: 35px;
}
.range::-webkit-slider-thumb {
    appearance: none;
    width: 2px;
    height: 10px;
    background-color: #666;
}
.tile {
    height: 23px;
    padding-left: 22px;
}
.tile + .field {
    margin-top: 5px;
}
.pane-foot {
    height: 50px;
    display: flex;
    gap: 10px;
    padding-top: 4px;
}
.pane-foot button {
    border-color: #dadada;
    padding: 0 8px;
}

/* callouts above the work area */
.marks {
    position: absolute;
    top: 0;
    right: 0;
    pointer-events: none;
    font-family: "Noto Sans CJK SC", sans-serif;
    font-size: 32px;
}
.watermark {
    fill: #fff;
    fill-opacity: .7;
    stroke: #aaa;
    stroke-opacity: .5;
    stroke-width: 1px;
    font-weight: bold;
}
.watermark text {
    font-family: "Open Sans", "Noto Sans CJK SC", sans-serif;
}
.watermark .logo {
    font-size: 50px;
}
.watermark .du {
    font-size: 27px;
    fill: #d5d5d5;
}
.watermark .jy {
    font-size: 39px;
}
.watermark .url {
    font-size: 25px;
    font-weight: 600;
}

/* status bar */
.status {
    height: 22px;
    flex: none;
    display: flex;
    align-items: center;
    padding-left: 7px;
    background-color: #f3f3f3;
    border-top: 1px solid #c6c6c6;
}
.count {
    margin-right: 24px;
}
.lang {
    flex: 1;
    padding-left: 16px;
}
.note {
    gap: 4px;
    margin-right: 19px;
}
.views {
    display: flex;
    margin-right: 5px;
}
.views button {
    width: 40px;
    height: 21px;
}
.views .active {
    background-color: #c6c6c6;
}
.zoom {
    width: 100px;
    margin: 0 5px;
}
.zoom::-webkit-slider-thumb {
    appearance: none;
    width: 5px;
    height: 11px;
    background-color: #666;
}
.percent {
    width: 38px;
    margin-left: 12px;
}
.fit {
    margin-right: 15px;
}
```
